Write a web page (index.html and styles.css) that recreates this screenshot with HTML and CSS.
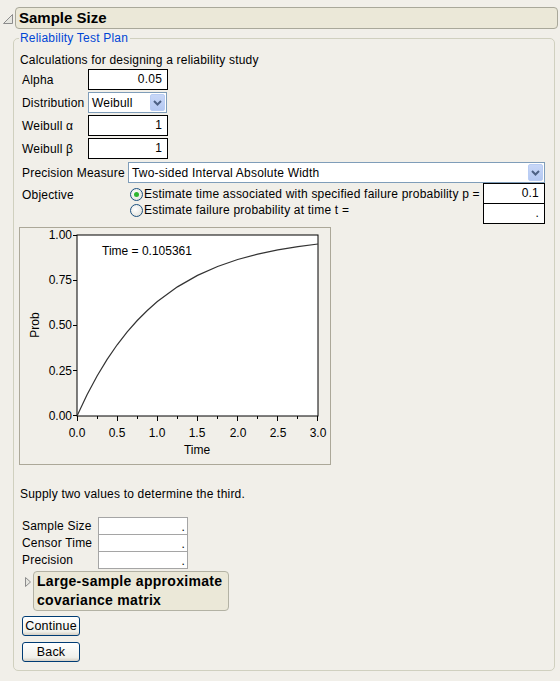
FILE: index.html
```html
<!DOCTYPE html>
<html>
<head>
<meta charset="utf-8">
<link rel="stylesheet" href="styles.css">
</head>
<body>
<div class="page">
  <div class="header">
    <svg class="tri-open" width="12" height="12" viewBox="0 0 12 12"><path d="M10.5 1.5 L10.5 10.5 L1.5 10.5 Z" fill="#e6e6e0" stroke="#8c8c8c" stroke-width="1"/></svg>
    <div class="title">Sample Size</div>
  </div>
  <fieldset class="group">
    <legend>Reliability Test Plan</legend>
    <div class="intro">Calculations for designing a reliability study</div>
    <div class="params">
      <div class="lbl">Alpha</div><div class="num">0.05</div>
      <div class="lbl">Distribution</div>
      <div class="select small"><span>Weibull</span><span class="drop"><svg width="9" height="6" viewBox="0 0 9 6"><path d="M1 1 L4.5 4.5 L8 1" fill="none" stroke="#4d6185" stroke-width="2"/></svg></span></div>
      <div class="lbl">Weibull α</div><div class="num">1</div>
      <div class="lbl">Weibull β</div><div class="num">1</div>
    </div>
    <div class="prec-row">
      <div class="lbl">Precision Measure</div>
      <div class="select wide"><span>Two-sided Interval Absolute Width</span><span class="drop"><svg width="9" height="6" viewBox="0 0 9 6"><path d="M1 1 L4.5 4.5 L8 1" fill="none" stroke="#4d6185" stroke-width="2"/></svg></span></div>
    </div>
    <div class="obj-row">
      <div class="lbl obj-lbl">Objective</div>
      <div class="options">
        <div class="opt"><span class="radio on"><span class="dot"></span></span><span class="opt-text">Estimate time associated with specified failure probability p =</span></div>
        <div class="opt"><span class="radio"></span><span class="opt-text">Estimate failure probability at time t =</span></div>
      </div>
      <div class="obj-inputs">
        <div class="num obj">0.1</div>
        <div class="num obj">.</div>
      </div>
    </div>
    <div class="chart">
      <svg width="310" height="236" viewBox="1 1 310 236">
        <rect x="58" y="8" width="241" height="181" fill="#fff" stroke="#000" stroke-width="1"/>
        <path d="M58 189 L68.04 167.73 L78.08 148.96 L88.13 132.4 L98.17 117.78 L108.21 104.89 L118.25 93.5 L128.29 83.46 L138.33 74.59 L158.42 59.86 L178.5 48.38 L198.58 39.46 L218.67 32.49 L238.75 27.08 L258.83 22.86 L278.92 19.57 L299 17.01" fill="none" stroke="#333" stroke-width="1.2"/>
        <g stroke="#000" stroke-width="1">
          <path d="M54 8.5 H58 M54 53.5 H58 M54 98.5 H58 M54 143.5 H58 M54 188.5 H58"/>
          <path d="M58.5 189 V194 M98.5 189 V194 M138.5 189 V194 M178.5 189 V194 M218.5 189 V194 M258.5 189 V194 M298.5 189 V194"/>
          <path d="M78.5 189 V192 M118.5 189 V192 M158.5 189 V192 M198.5 189 V192 M238.5 189 V192 M278.5 189 V192"/>
        </g>
        <g class="ax" text-anchor="end">
          <text x="53" y="12">1.00</text>
          <text x="53" y="57">0.75</text>
          <text x="53" y="102">0.50</text>
          <text x="53" y="148">0.25</text>
          <text x="53" y="193">0.00</text>
        </g>
        <g class="ax" text-anchor="middle">
          <text x="58" y="210">0.0</text>
          <text x="98" y="210">0.5</text>
          <text x="138" y="210">1.0</text>
          <text x="178" y="210">1.5</text>
          <text x="219" y="210">2.0</text>
          <text x="259" y="210">2.5</text>
          <text x="299" y="210">3.0</text>
          <text x="178" y="227">Time</text>
          <text x="0" y="0" transform="translate(20 98) rotate(-90)">Prob</text>
        </g>
        <text class="ax" x="83" y="28">Time = 0.105361</text>
      </svg>
    </div>
    <div class="supply">Supply two values to determine the third.</div>
    <div class="solve">
      <div class="lbl">Sample Size</div><div class="num gray">.</div>
      <div class="lbl">Censor Time</div><div class="num gray">.</div>
      <div class="lbl">Precision</div><div class="num gray">.</div>
    </div>
    <div class="disclosure">
      <svg class="tri-closed" width="8" height="12" viewBox="0 0 8 12"><path d="M1.5 1.5 L6.5 6 L1.5 10.5 Z" fill="#e6e6e0" stroke="#8c8c8c" stroke-width="1"/></svg>
      <div class="disc-title">Large-sample approximate<br>covariance matrix</div>
    </div>
    <div class="buttons">
      <button class="btn">Continue</button>
      <button class="btn">Back</button>
    </div>
  </fieldset>
</div>
</body>
</html>
```

FILE: styles.css
```css
html, body {
  margin: 0;
  padding: 0;
  background: #f1efe9;
}
body {
  font-family: "Liberation Sans", Arial, sans-serif;
  font-size: 12px;
  letter-spacing: 0.2px;
  color: #000;
}
.page {
  width: 560px;
  height: 681px;
  padding: 7px 0 0 0;
  box-sizing: border-box;
}
.header {
  display: flex;
  align-items: center;
  height: 22px;
}
.tri-open {
  margin: 2px 1px 0 2px;
}
.title {
  flex: none;
  height: 20px;
  border: 1px solid #a9a89a;
  border-radius: 4px;
  background: #ebe8d8;
  font-size: 15px;
  font-weight: bold;
  letter-spacing: 0;
  line-height: 20px;
  padding-left: 3px;
  box-sizing: content-box;
  width: 538px;
}
.group {
  margin: 2px 0 0 13px;
  width: 542px;
  height: 640px;
  box-sizing: border-box;
  border: 1px solid #d0d0bf;
  border-radius: 5px;
  padding: 0 6px 0 6px;
}
.group legend {
  color: #0046d5;
  padding: 0 2px 0 1px;
  margin-left: -1px;
  font-size: 12px;
  line-height: 14px;
}
.intro {
  margin-top: 8px;
  line-height: 14px;
}
.params {
  display: grid;
  grid-template-columns: 66px 80px;
  grid-auto-rows: 21px;
  row-gap: 2px;
  margin-top: 2px;
  margin-left: 2px;
  align-items: center;
}
.lbl {
  line-height: 14px;
  white-space: nowrap;
}
.num {
  height: 21px;
  border: 1px solid #000;
  background: #fff;
  box-sizing: border-box;
  text-align: right;
  padding-right: 5px;
  line-height: 19px;
}
.select {
  display: flex;
  align-items: center;
  height: 21px;
  border: 1px solid #7f9db9;
  background: #fff;
  box-sizing: border-box;
  padding-left: 3px;
  justify-content: space-between;
}
.select.small {
  width: 79px;
}
.drop {
  width: 15px;
  height: 17px;
  margin-right: 1px;
  background: linear-gradient(#c8d7f7, #b4c8f2);
  border: 1px solid #b9cdf4;
  border-radius: 2px;
  box-sizing: border-box;
  display: flex;
  align-items: center;
  justify-content: center;
}
.prec-row {
  display: flex;
  align-items: center;
  margin-top: 3px;
  margin-left: 2px;
}
.prec-row .lbl {
  width: 106px;
}
.select.wide {
  width: 417px;
}
.obj-row {
  display: flex;
  margin-left: 2px;
  margin-top: 0;
}
.obj-lbl {
  width: 108px;
  padding-top: 5px;
}
.options {
  width: 353px;
  padding-top: 3px;
}
.opt {
  display: flex;
  align-items: center;
  height: 16px;
  line-height: 14px;
  white-space: nowrap;
}
.radio {
  flex: none;
  width: 11px;
  height: 11px;
  border: 1px solid #1c5180;
  border-radius: 50%;
  background: radial-gradient(circle at 40% 40%, #fff, #dcdcd5);
  display: inline-flex;
  align-items: center;
  justify-content: center;
  margin-right: 1px;
}
.radio .dot {
  width: 5px;
  height: 5px;
  border-radius: 50%;
  background: #2fb52f;
}
.obj-inputs {
  display: flex;
  flex-direction: column;
}
.num.obj {
  width: 62px;
  height: 21px;
  margin-bottom: -1px;
}
.chart {
  margin-top: 4px;
  margin-left: -1px;
  width: 312px;
  height: 238px;
  border: 1px solid #aca899;
  box-sizing: border-box;
  letter-spacing: 0;
}
.chart svg {
  display: block;
}
.ax {
  font-family: "Liberation Sans", Arial, sans-serif;
  font-size: 12px;
  fill: #000;
}
.supply {
  margin-top: 22px;
  line-height: 14px;
}
.solve {
  display: grid;
  grid-template-columns: 76px 90px;
  grid-auto-rows: 17px;
  margin-top: 16px;
  margin-left: 2px;
  align-items: center;
}
.num.gray {
  height: 18px;
  border-color: #a5a5a5;
  line-height: 18px;
  padding-right: 2px;
  margin-bottom: -1px;
  align-self: start;
}
.disclosure {
  display: flex;
  align-items: flex-start;
  margin-top: 3px;
  margin-left: 4px;
}
.tri-closed {
  margin-top: 5px;
  margin-right: 1px;
}
.disc-title {
  width: 191px;
  height: 38px;
  border: 1px solid #b3b2a4;
  border-radius: 4px;
  background: #ebe8d8;
  font-size: 14px;
  font-weight: bold;
  letter-spacing: 0.3px;
  white-space: nowrap;
  line-height: 19px;
  padding: 0 0 0 3px;
}
.buttons {
  display: flex;
  flex-direction: column;
  gap: 6px;
  margin-top: 5px;
  margin-left: 2px;
}
.btn {
  width: 58px;
  height: 20px;
  border: 1px solid #003c74;
  border-radius: 3px;
  background: linear-gradient(#ffffff, #f0f0ea 80%, #d6d0c5);
  font-family: "Liberation Sans", Arial, sans-serif;
  font-size: 12.5px;
  letter-spacing: 0.2px;
  padding: 0;
  color: #000;
}
```
